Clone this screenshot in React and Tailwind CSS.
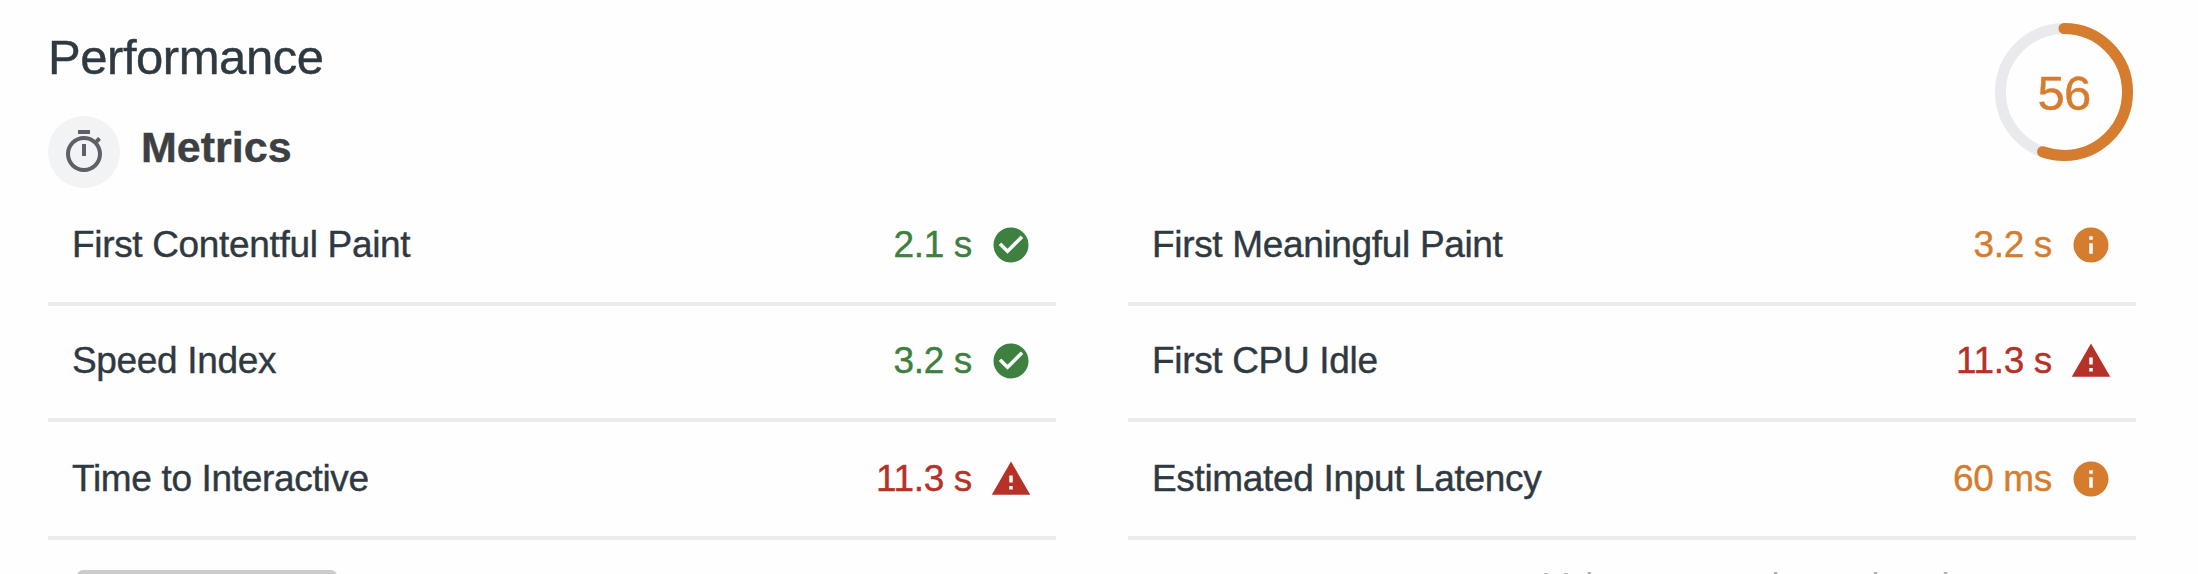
const leftMetrics = [
  { name: 'First Contentful Paint', value: '2.1 s', rating: 'pass' },
  { name: 'Speed Index', value: '3.2 s', rating: 'pass' },
  { name: 'Time to Interactive', value: '11.3 s', rating: 'fail' },
];

const rightMetrics = [
  { name: 'First Meaningful Paint', value: '3.2 s', rating: 'average' },
  { name: 'First CPU Idle', value: '11.3 s', rating: 'fail' },
  { name: 'Estimated Input Latency', value: '60 ms', rating: 'average' },
];

const ratingColors = {
  pass: 'text-[#3d8040]',
  average: 'text-[#d67c2e]',
  fail: 'text-[#b63228]',
};

const ratingPaths = {
  pass: 'M24 4C12.95 4 4 12.95 4 24c0 11.04 8.95 20 20 20 11.04 0 20-8.96 20-20 0-11.05-8.96-20-20-20zm-4 30L10 24l2.83-2.83L20 28.34l15.17-15.17L38 16 20 34z',
  average:
    'M24 4C12.95 4 4 12.95 4 24s8.95 20 20 20 20-8.95 20-20S35.05 4 24 4zm2 30h-4V22h4v12zm0-16h-4v-4h4v4z',
  fail: 'M2 42h44L24 4 2 42zm24-6h-4v-4h4v4zm0-8h-4v-8h4v8z',
};

function Metric({ name, value, rating, height }) {
  return (
    <div className={`${height} flex items-start justify-between border-b-4 border-[#ebebeb] px-[24px] text-[37px] leading-[42px]`}>
      <span className="tracking-[-0.33px]">{name}</span>
      <div className={`flex items-center ${ratingColors[rating]}`}>
        <span className="tracking-[-0.35px] whitespace-pre">{value}</span>
        <svg viewBox="0 0 48 48" className="ml-[18px] size-[42px]" fill="currentColor">
          <path d={ratingPaths[rating]} />
        </svg>
      </div>
    </div>
  );
}

const rowHeights = ['h-[82px]', 'h-[116px] pt-[34px]', 'h-[118px] pt-[36px]'];

function Column({ metrics }) {
  return (
    <div className="w-[1008px]">
      {metrics.map((m, i) => (
        <Metric key={m.name} {...m} height={rowHeights[i]} />
      ))}
    </div>
  );
}

function Gauge() {
  return (
    <div className="grid size-[138px] place-items-center text-[#d67c2e]">
      <svg viewBox="0 0 138 138" className="col-start-1 row-start-1 size-[138px]" fill="none" strokeWidth="11">
        <circle cx="69" cy="69" r="63.5" stroke="#e8eaed" />
        <circle
          cx="69"
          cy="69"
          r="63.5"
          stroke="currentColor"
          strokeLinecap="round"
          pathLength="100"
          strokeDasharray="55.5 100"
          transform="rotate(-90 69 69)"
        />
      </svg>
      <span className="col-start-1 row-start-1 pt-[2px] text-[49px] leading-[56px] tracking-[-0.8px]">56</span>
    </div>
  );
}

export default function App() {
  return (
    <div className="flex h-[574px] w-[2198px] flex-col overflow-hidden bg-[#fefefe] font-['Liberation_Sans',Arial,sans-serif] text-[#2f3941] [-webkit-text-stroke:0.4px]">
      <header className="flex h-[224px] shrink-0 justify-between pr-[65px] pl-[48px]">
        <div className="pt-[29px]">
          <h1 className="text-[49px] leading-[56px] tracking-[-0.45px]">Performance</h1>
          <div className="mt-[31px] flex">
            <div className="flex size-[72px] items-center justify-center rounded-full bg-[#f1f3f4]">
              <svg viewBox="0 0 24 24" className="size-[48px]" fill="#5f6067">
                <path d="M15 1H9v2h6V1zm-4 13h2V8h-2v6zm8.03-6.61l1.42-1.42c-.43-.51-.9-.99-1.41-1.41l-1.42 1.42C16.07 4.74 14.12 4 12 4c-4.97 0-9 4.03-9 9s4.02 9 9 9 9-4.03 9-9c0-2.12-.74-4.07-1.97-5.61zM12 20c-3.87 0-7-3.13-7-7s3.13-7 7-7 7 3.13 7 7-3.13 7-7 7z" />
              </svg>
            </div>
            <h2 className="ml-[21px] pt-[7px] text-[43px] leading-[48px] font-bold text-[#3c4043]">Metrics</h2>
          </div>
        </div>
        <div className="pt-[23px]">
          <Gauge />
        </div>
      </header>
      <main className="flex shrink-0 gap-[72px] pl-[48px]">
        <Column metrics={leftMetrics} />
        <Column metrics={rightMetrics} />
      </main>
      <footer className="flex h-[34px] shrink-0 items-start justify-between pr-[86px] pl-[77px]">
        <div className="mt-[30px] h-[40px] w-[260px] shrink-0 rounded-[6px] bg-[#ccc]" />
        <p className="mt-[26px] w-[568px] text-[36px] leading-[42px] whitespace-nowrap text-[#b0b0b0] [-webkit-text-stroke:0px]">
          Values are estimated and may vary.
        </p>
      </footer>
    </div>
  );
}
